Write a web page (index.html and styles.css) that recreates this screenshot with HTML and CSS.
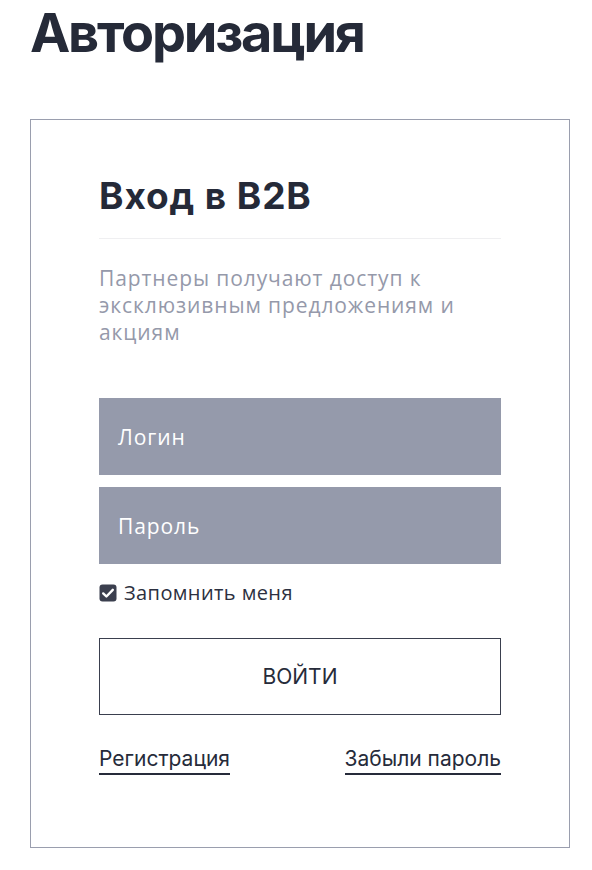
FILE: index.html
```html
<!DOCTYPE html>
<html lang="ru">
<head>
<meta charset="utf-8">
<title>Авторизация</title>
<link rel="stylesheet" href="styles.css">
</head>
<body>
<main class="page">
  <h1 class="page-title">Авторизация</h1>
  <section class="card">
    <h2 class="card-title">Вход в B2B</h2>
    <p class="card-desc">Партнеры получают доступ к эксклюзивным предложениям и акциям</p>
    <form class="form">
      <div class="field">Логин</div>
      <div class="field">Пароль</div>
      <label class="remember">
        <span class="check">
          <svg viewBox="0 0 18 18" width="18" height="18"><rect x="0.5" y="0.5" width="17" height="17" rx="3" fill="#3b3f4e"/><path d="M4.2 9.4 L7.4 12.5 L13.8 5.8" fill="none" stroke="#fff" stroke-width="2.4" stroke-linecap="round" stroke-linejoin="round"/></svg>
        </span>
        <span>Запомнить меня</span>
      </label>
      <div class="submit">ВОЙТИ</div>
      <div class="links">
        <a class="link">Регистрация</a>
        <a class="link">Забыли пароль</a>
      </div>
    </form>
  </section>
</main>
</body>
</html>
```
FILE: styles.css
```css
html, body {
  margin: 0;
  padding: 0;
  background: #fff;
}
.page {
  padding: 0 22px 0 30px;
  font-family: Inter, "Liberation Sans", sans-serif;
  color: #252a38;
}
.page-title {
  margin: 0;
  padding-top: 0;
  font-size: 54px;
  line-height: 66px;
  font-weight: 700;
  letter-spacing: -2.2px;
}
.card {
  margin-top: 53px;
  border: 1px solid #9a9eae;
  padding: 56px 68px 72px;
}
.card-title {
  margin: 0;
  font-size: 37px;
  line-height: 40px;
  font-weight: 700;
  letter-spacing: 0.9px;
  padding-bottom: 22px;
  border-bottom: 1px solid #efeff1;
}
.card-desc {
  margin: 26px 0 0;
  font-family: "Open Sans", sans-serif;
  font-size: 21px;
  line-height: 27px;
  letter-spacing: 0.9px;
  color: #9599aa;
}
.form {
  margin-top: 52px;
  display: flex;
  flex-direction: column;
}
.field {
  height: 77px;
  background: #959aab;
  color: #fff;
  font-family: "Open Sans", sans-serif;
  font-size: 21px;
  letter-spacing: 0.9px;
  display: flex;
  align-items: center;
  padding-left: 19px;
  margin-bottom: 12px;
}
.remember {
  display: flex;
  align-items: center;
  gap: 7px;
  margin-top: 3px;
  font-family: "Open Sans", sans-serif;
  font-size: 20px;
  letter-spacing: 0.4px;
  color: #2c3040;
}
.check {
  display: flex;
}
.submit {
  margin-top: 32px;
  height: 75px;
  border: 1px solid #3a3f4e;
  display: flex;
  align-items: center;
  justify-content: center;
  font-size: 21px;
  color: #262b3a;
}
.links {
  margin-top: 31px;
  display: flex;
  justify-content: space-between;
}
.link {
  font-size: 21px;
  line-height: 26px;
  color: #262b3a;
  border-bottom: 2px solid #262b3a;
  padding-bottom: 1px;
}
```
